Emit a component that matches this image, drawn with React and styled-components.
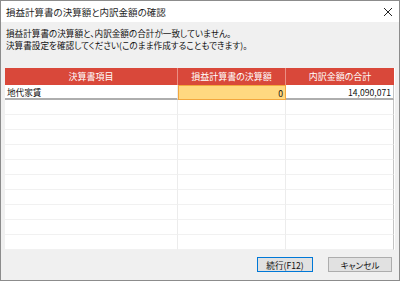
import React from "react"
import styled, { createGlobalStyle } from "styled-components"

const GlobalStyle = createGlobalStyle`
  html, body {
    margin: 0;
    padding: 0;
    background: #f0f0f0;
  }
  body {
    font-family: "Noto Sans CJK JP", "Noto Sans", sans-serif;
    font-feature-settings: "palt";
  }
`

const Window = styled.div`
  box-sizing: border-box;
  width: 400px;
  height: 281px;
  border: 1px solid #8c8c8c;
  display: flex;
  flex-direction: column;
  background: #f0f0f0;
`

const TitleBar = styled.div`
  height: 21px;
  flex: none;
  background: #fff;
  display: flex;
  align-items: center;
  justify-content: space-between;
  padding: 0 6px 0 5px;
  font-size: 9.5px;
  color: #1e1e1e;
`

const Body = styled.div`
  flex: 1;
  display: flex;
  flex-direction: column;
  padding: 5px 4px 0 4px;
`

const Message = styled.div`
  font-size: 8.6px;
  line-height: 12px;
  color: #111;
  padding-left: 1px;
`

const Table = styled.div`
  margin-top: 17px;
  display: grid;
  grid-template-columns: 173px 108px 108px;
  background: #fff;
  font-size: 8.6px;
  color: #111;
`

const HeadCell = styled.div`
  height: 17px;
  background: #d9483a;
  color: #fff;
  display: flex;
  align-items: center;
  justify-content: center;
  box-sizing: border-box;
  border-right: ${p => (p.last ? "none" : "1px solid #ea8f84")};
  font-size: 9px;
`

const Cell = styled.div`
  height: ${p => (p.first ? 15 : 15)}px;
  box-sizing: border-box;
  display: flex;
  align-items: center;
  justify-content: ${p => (p.right ? "flex-end" : "flex-start")};
  padding: 0 2px;
  background: ${p => (p.edit ? "#ffd880" : "#fff")};
  border-right: ${p => (p.edit ? "1px solid #f3a73d" : p.last ? "1px solid #c4c4c4" : "1px solid #ececec")};
  border-left: ${p => (p.edit ? "1px solid #f3a73d" : "none")};
  border-top: ${p => (p.edit ? "1px solid #f3a73d" : "none")};
  border-bottom: ${p =>
    p.edit ? "1px solid #f3a73d" : p.first ? "2px solid #aeaeae" : "1px solid #f1f1f1"};
  white-space: nowrap;
`

const Buttons = styled.div`
  margin-top: 7px;
  display: flex;
  justify-content: flex-end;
  gap: 15px;
  padding-right: 3px;
`

const Button = styled.button`
  box-sizing: border-box;
  height: 15px;
  width: ${p => p.w}px;
  padding: 0;
  font-family: inherit;
  font-feature-settings: "palt";
  font-size: 8.6px;
  color: #111;
  background: #e1e1e1;
  border: 1px solid ${p => (p.primary ? "#0078d7" : "#adadad")};
  display: flex;
  align-items: center;
  justify-content: center;
`

const CloseIcon = () => (
  <svg width="10" height="10" viewBox="0 0 10 10">
    <path d="M1 1 L9 9 M9 1 L1 9" stroke="#222" strokeWidth="1" fill="none" />
  </svg>
)

const rows = [
  { item: "地代家賃", amount: "0", total: "14,090,071" },
  ...Array.from({ length: 10 }, () => null),
]

export default function App() {
  return (
    <>
      <GlobalStyle />
      <Window>
        <TitleBar>
          <span>損益計算書の決算額と内訳金額の確認</span>
          <CloseIcon />
        </TitleBar>
        <Body>
          <Message>
            <div>損益計算書の決算額と、内訳金額の合計が一致していません。</div>
            <div>決算書設定を確認してください(このまま作成することもできます)。</div>
          </Message>
          <Table>
            <HeadCell>決算書項目</HeadCell>
            <HeadCell>損益計算書の決算額</HeadCell>
            <HeadCell last>内訳金額の合計</HeadCell>
            {rows.map((r, i) =>
              r ? (
                <React.Fragment key={i}>
                  <Cell first>{r.item}</Cell>
                  <Cell first edit right>{r.amount}</Cell>
                  <Cell first last right>{r.total}</Cell>
                </React.Fragment>
              ) : (
                <React.Fragment key={i}>
                  <Cell />
                  <Cell />
                  <Cell last />
                </React.Fragment>
              )
            )}
          </Table>
          <Buttons>
            <Button primary w={56}>続行(F12)</Button>
            <Button w={64}>キャンセル</Button>
          </Buttons>
        </Body>
      </Window>
    </>
  )
}
